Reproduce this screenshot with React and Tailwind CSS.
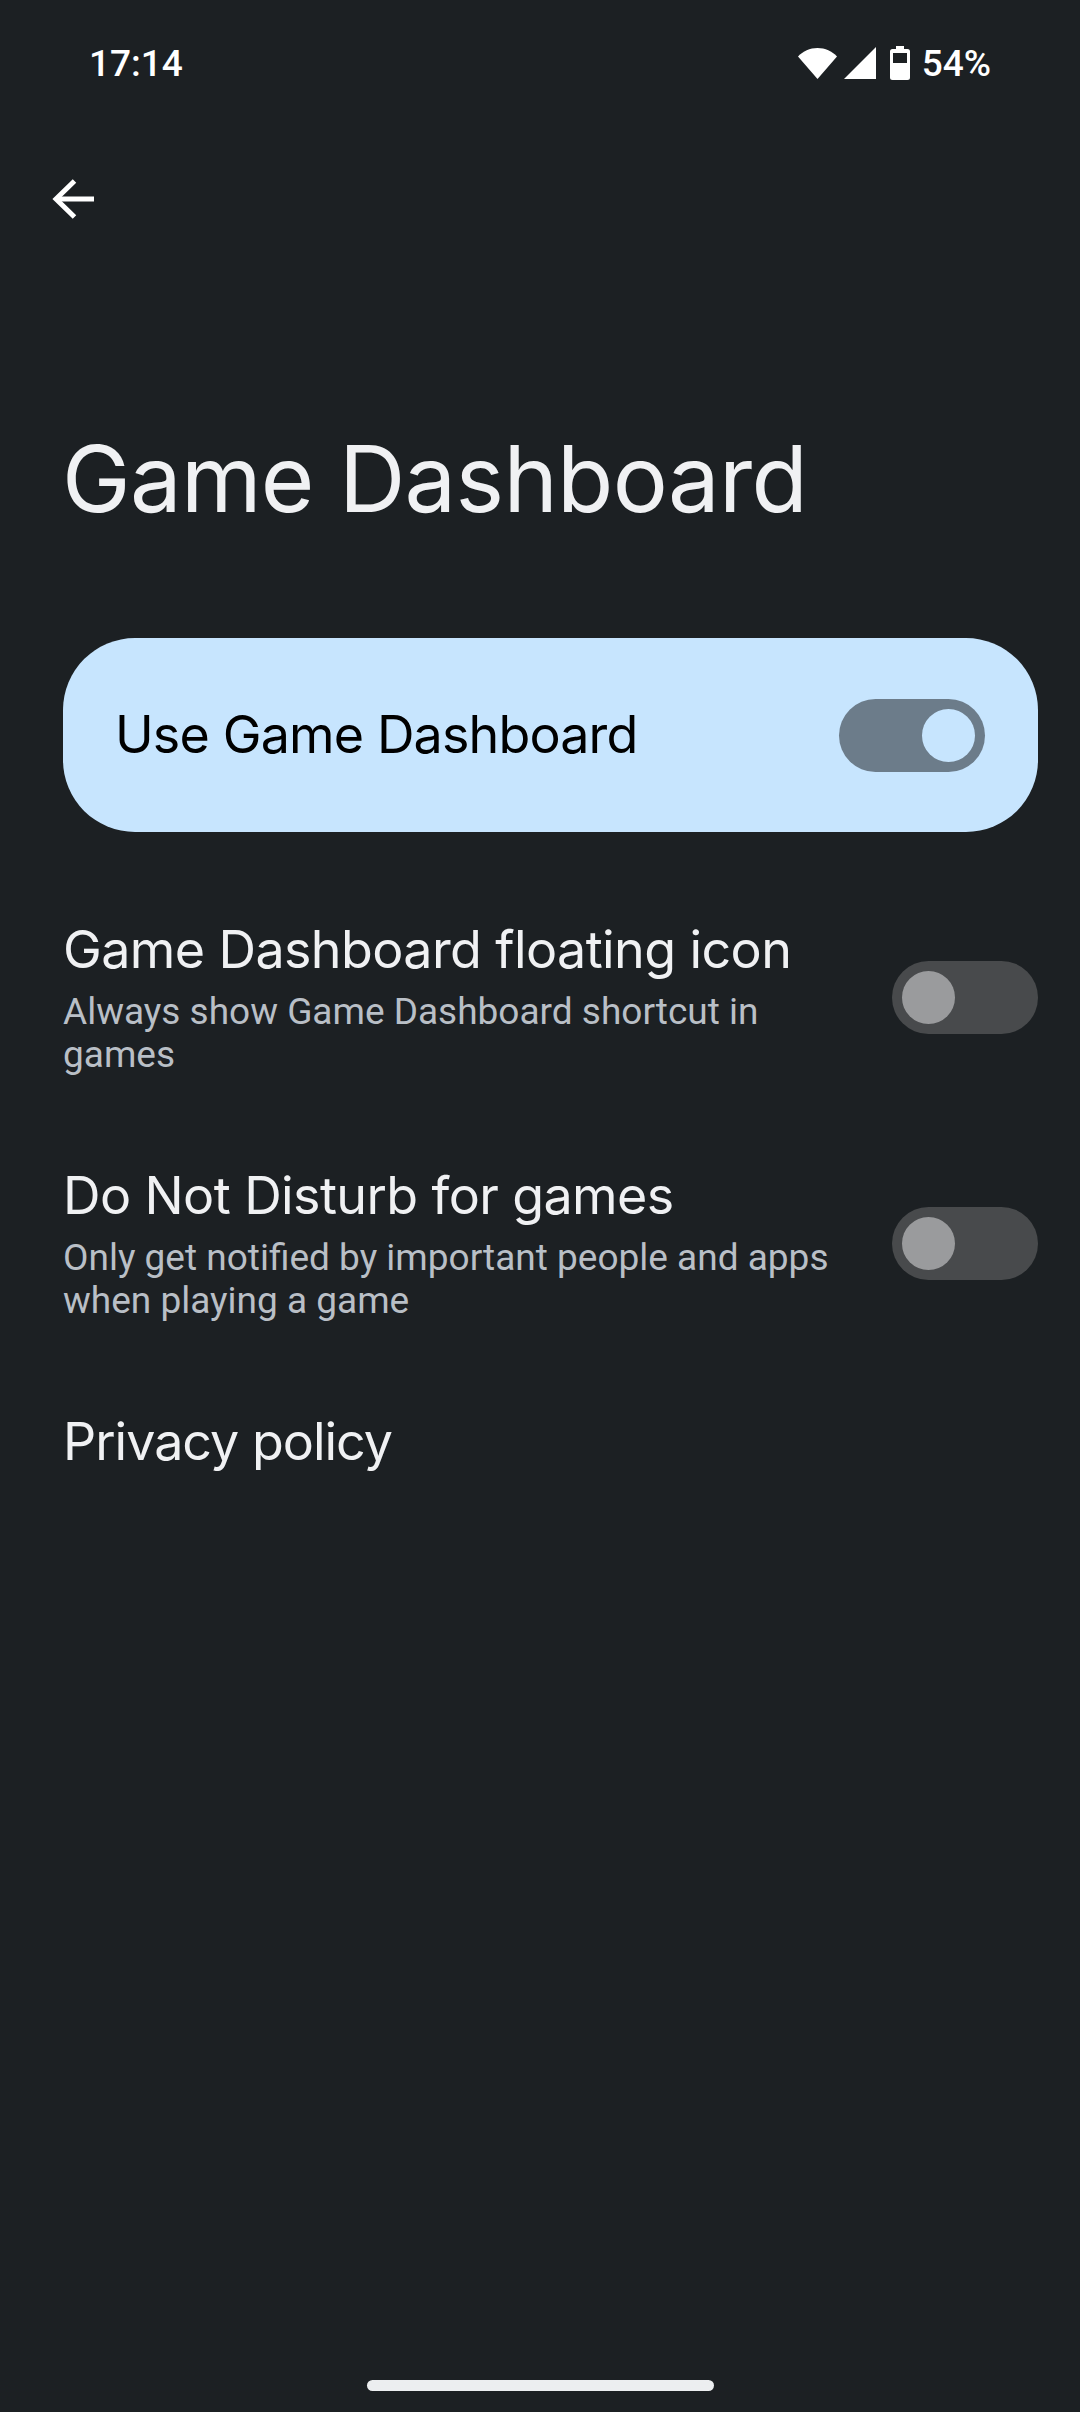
function Toggle({ on }) {
  return (
    <div
      className={`flex h-[73px] w-[146px] shrink-0 items-center rounded-full p-[10px] ${
        on ? "justify-end bg-[#6c7c8a]" : "justify-start bg-[#484a4c]"
      }`}
    >
      <div className={`h-[53px] w-[53px] rounded-full ${on ? "bg-[#c7e5fe]" : "bg-[#9a9b9d]"}`} />
    </div>
  );
}

function SettingRow({ title, summary }) {
  return (
    <div className="flex h-[246px] items-center justify-between">
      <div className="w-[790px]">
        <div className="pt-[1px] font-['Inter',sans-serif] text-[52px] leading-[60px] tracking-[-0.6px] text-[#f0f1f3]">{title}</div>
        <div className="mt-[10px] font-['Roboto',sans-serif] text-[37px] leading-[43px] text-[#b9bfc6]">{summary}</div>
      </div>
      <Toggle on={false} />
    </div>
  );
}

export default function App() {
  return (
    <div className="flex h-[2412px] w-[1080px] flex-col overflow-hidden bg-[#1c2023]">
      {/* Status bar */}
      <div className="flex h-[126px] items-center justify-between px-[89px] font-['Roboto',sans-serif] font-medium text-white">
        <span className="text-[37px] leading-none">17:14</span>
        <div className="flex items-center">
          <svg width="39" height="31" viewBox="0 0 39 31" fill="white">
            <path d="M19.500 31 0 8.500C5 3.200 11.800 0 19.500 0S34 3.200 39 8.500Z" />
          </svg>
          <svg className="ml-[7px]" width="32" height="32" viewBox="0 0 32 32" fill="white">
            <path d="M32 0v32H0Z" />
          </svg>
          <svg className="ml-[14px]" width="20" height="34" viewBox="0 0 20 34" fill="white">
            <path
              fillRule="evenodd"
              d="M6 0h8v3h3.500A2.500 2.500 0 0 1 20 5.500V31.500A2.500 2.500 0 0 1 17.500 34H2.500A2.500 2.500 0 0 1 0 31.500V5.500A2.500 2.500 0 0 1 2.500 3H6ZM3 7v10h14V7Z"
            />
          </svg>
          <span className="ml-[12px] text-[37px] leading-none">54%</span>
        </div>
      </div>

      {/* Back arrow */}
      <div className="flex h-[146px] items-center pl-[52px]">
        <svg width="44" height="44" viewBox="0 0 44 44" fill="none" stroke="white" strokeWidth="5">
          <path d="M42 22H5" />
          <path d="M22.500 4 4 22l18.500 18" />
        </svg>
      </div>

      {/* Page title */}
      <h1 className="mt-[152px] h-[214px] pl-[62px] font-['Inter',sans-serif] text-[92px] leading-[110px] font-normal tracking-[-0.7px] text-[#f0f1f3]">
        Game Dashboard
      </h1>

      <div className="pl-[63px] pr-[42px]">
        {/* Main switch card */}
        <div className="flex h-[194px] items-center justify-between rounded-[72px] bg-[#c7e5fe] pl-[52px] pr-[53px]">
          <span className="font-['Inter',sans-serif] text-[52px] tracking-[-0.85px] text-black">Use Game Dashboard</span>
          <Toggle on />
        </div>

        <div className="mt-[42px]">
          <SettingRow
            title="Game Dashboard floating icon"
            summary="Always show Game Dashboard shortcut in games"
          />
          <SettingRow
            title="Do Not Disturb for games"
            summary="Only get notified by important people and apps when playing a game"
          />
        </div>

        <div className="mt-[46px] font-['Inter',sans-serif] text-[52px] leading-[60px] tracking-[-1px] text-[#f0f1f3]">Privacy policy</div>
      </div>

      {/* Gesture handle */}
      <div className="mt-auto mb-[21px] h-[11px] w-[347px] self-center rounded-full bg-[#eceef0]" />
    </div>
  );
}
